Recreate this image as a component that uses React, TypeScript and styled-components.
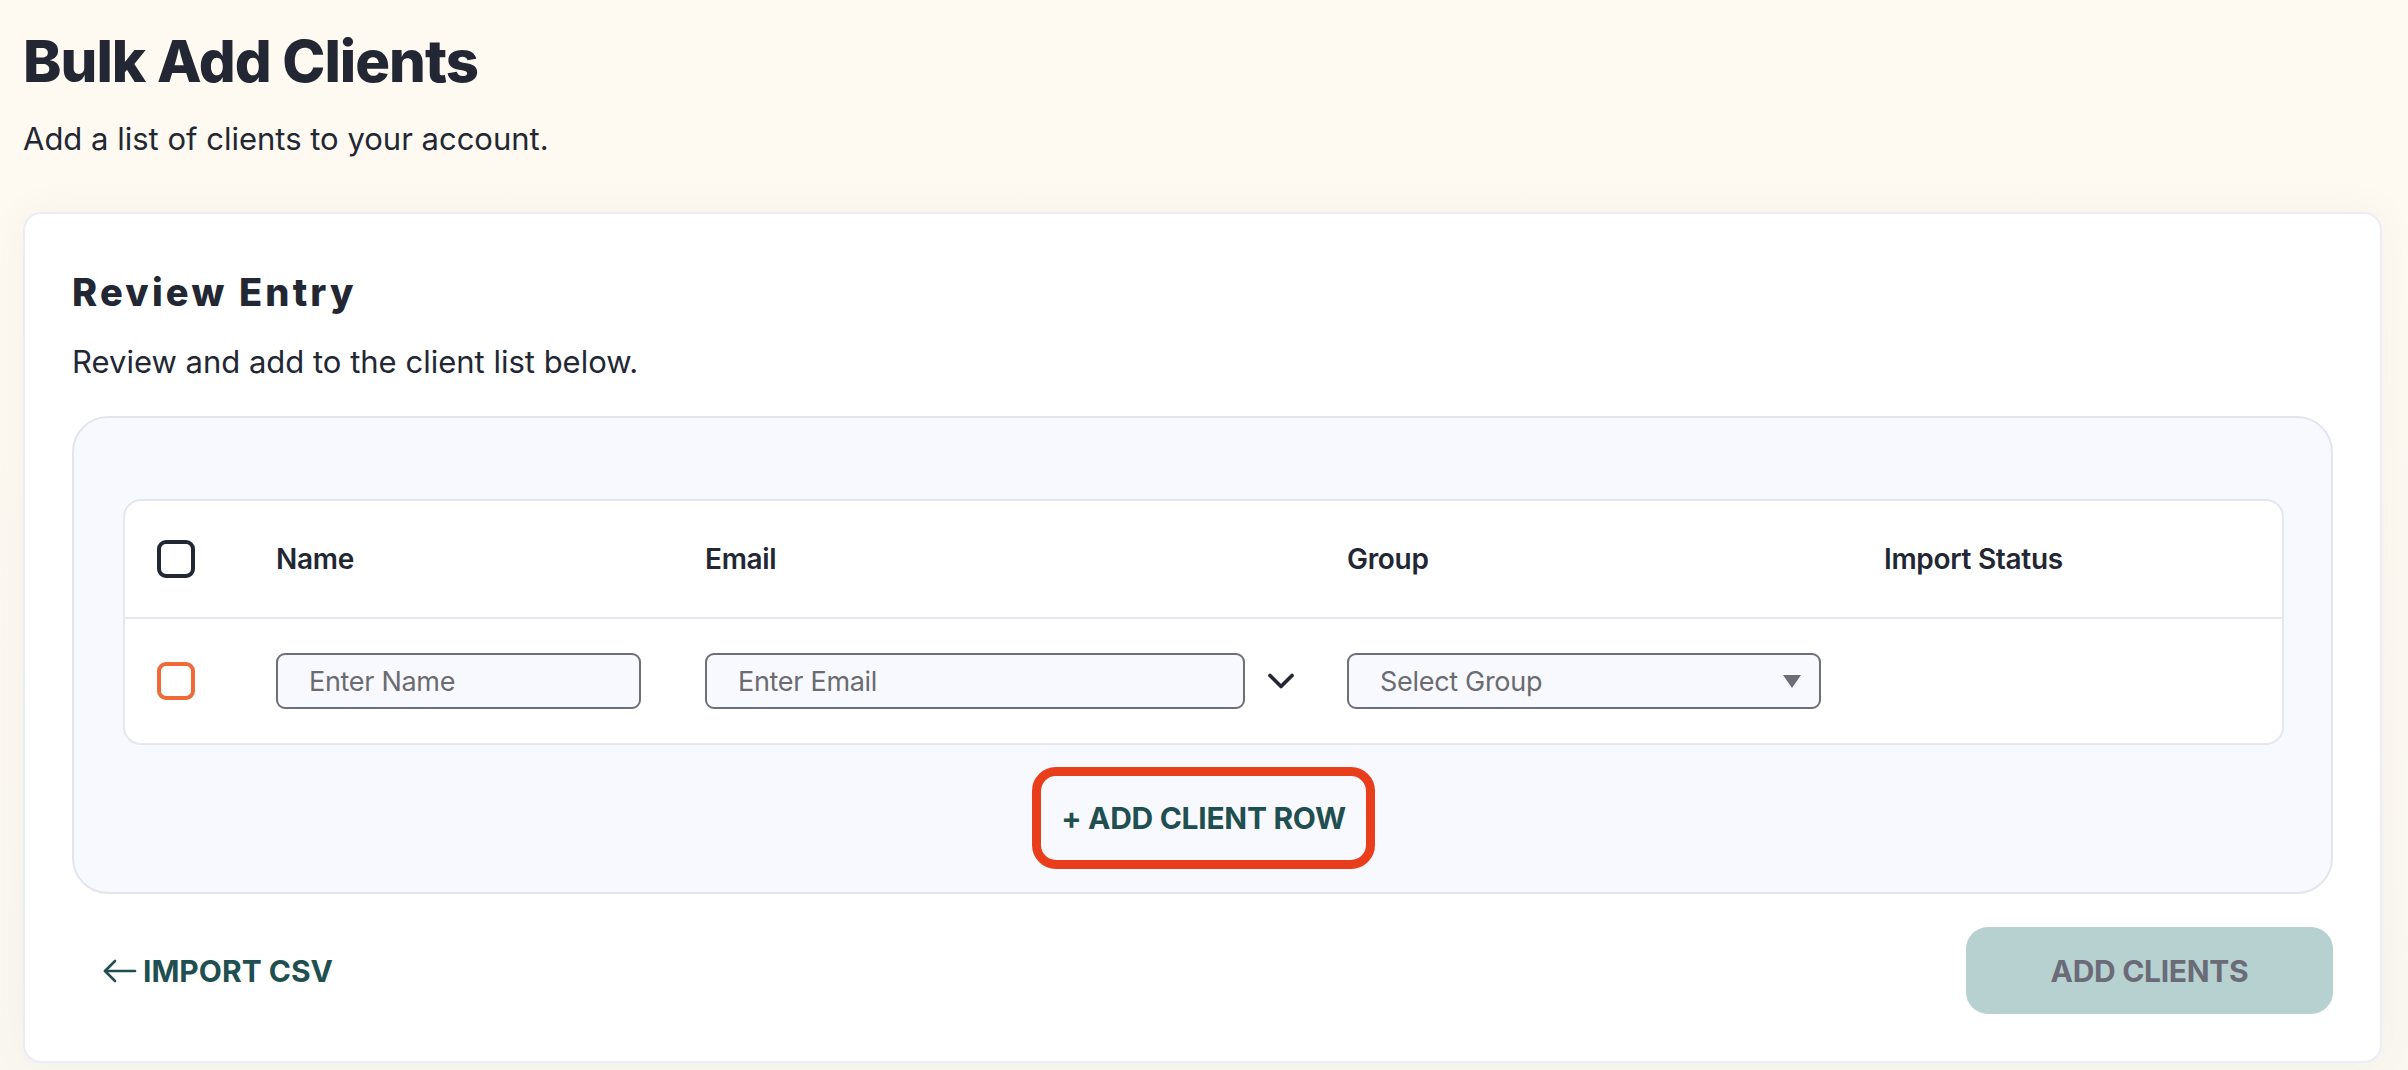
import styled, { createGlobalStyle } from "styled-components";
import { ChevronDown } from "lucide-react";

const GlobalStyle = createGlobalStyle`
  html, body {
    margin: 0;
    padding: 0;
  }
  body {
    font-family: Inter, "Noto Sans", sans-serif;
    color: #222733;
    background: linear-gradient(180deg, #fffaf1 0%, #faf7f1 100%);
    min-height: 100vh;
  }
`;

const Page = styled.main`
  padding: 28px 26px 8px 23px;
  min-height: 100vh;
  box-sizing: border-box;
`;

const PageTitle = styled.h1`
  margin: 0;
  font-size: 58px;
  line-height: 66px;
  font-weight: 800;
  letter-spacing: -1px;
  color: #222733;
`;

const PageLead = styled.p`
  margin: 27px 0 0;
  font-size: 31px;
  line-height: 36px;
  color: #222733;
`;

const Card = styled.section`
  margin-top: 55px;
  background: #ffffff;
  border: 2px solid #ebecf6;
  border-radius: 18px;
  padding: 57px 47px 47px;
  box-shadow: 0 0 40px rgba(120, 100, 60, 0.05);
`;

const CardTitle = styled.h2`
  margin: 0;
  font-size: 38px;
  line-height: 43px;
  font-weight: 800;
  letter-spacing: 3.2px;
`;

const CardLead = styled.p`
  margin: 30px 0 0;
  font-size: 31px;
  line-height: 36px;
`;

const Panel = styled.div`
  margin-top: 36px;
  background: #f8f9fe;
  border: 2px solid #e3e5ee;
  border-radius: 36px;
  padding: 81px 47px 23px 49px;
  display: flex;
  flex-direction: column;
  align-items: center;
  gap: 22px;
`;

const Table = styled.div`
  align-self: stretch;
  background: #ffffff;
  border: 2px solid #e5e7ee;
  border-radius: 18px;
`;

const Row = styled.div<{ $head?: boolean }>`
  display: grid;
  grid-template-columns: 119px 429px 642px 537px 1fr;
  align-items: center;
  padding-left: 32px;
  height: ${(p) => (p.$head ? "116px" : "124px")};
  border-top: ${(p) => (p.$head ? "none" : "2px solid #e5e7ee")};
`;

const HeadCell = styled.div`
  font-size: 28px;
  font-weight: 600;
  color: #222733;
  letter-spacing: -0.3px;
`;

const Cell = styled.div`
  display: flex;
  align-items: center;
  gap: 14px;
`;

const Checkbox = styled.span<{ $tone: "dark" | "accent" }>`
  display: block;
  width: 38px;
  height: 38px;
  box-sizing: border-box;
  border-radius: 9px;
  border: 4px solid ${(p) => (p.$tone === "dark" ? "#222733" : "#ef6a37")};
  background: #ffffff;
`;

const TextInput = styled.input<{ $w: number }>`
  width: ${(p) => p.$w}px;
  height: 56px;
  box-sizing: border-box;
  border: 2px solid #6c6e78;
  border-radius: 9px;
  background: #f8f9fe;
  padding: 0 0 0 31px;
  font-family: Inter, sans-serif;
  font-size: 27px;
  letter-spacing: -0.3px;
  color: #222733;
  outline: none;

  &::placeholder {
    color: #6b6b70;
  }
`;

const SelectBox = styled.div`
  width: 474px;
  height: 56px;
  box-sizing: border-box;
  border: 2px solid #6c6e78;
  border-radius: 9px;
  background: #f8f9fe;
  padding: 0 18px 0 31px;
  display: flex;
  align-items: center;
  justify-content: space-between;
  font-size: 27px;
  letter-spacing: -0.3px;
  color: #6b6b70;
`;

const AddRowButton = styled.button`
  border: 9px solid #e83e1c;
  border-radius: 24px;
  background: #f8f9fe;
  height: 102px;
  padding: 0 20px;
  font-family: Inter, sans-serif;
  font-size: 30px;
  font-weight: 700;
  color: #1f4f50;
  letter-spacing: -0.3px;
`;

const Footer = styled.div`
  margin-top: 33px;
  display: flex;
  align-items: center;
  justify-content: space-between;
`;

const BackLink = styled.a`
  display: flex;
  align-items: center;
  gap: 6px;
  padding-left: 31px;
  font-size: 30px;
  font-weight: 700;
  color: #1f4f50;
  text-decoration: none;
`;

const SubmitButton = styled.button`
  width: 367px;
  height: 87px;
  border: none;
  border-radius: 22px;
  background: #b6d1d0;
  font-family: Inter, sans-serif;
  font-size: 30px;
  font-weight: 700;
  color: #6b6b78;
  letter-spacing: -0.3px;
`;

const ArrowLeft = () => (
  <svg width="34" height="24" viewBox="0 0 34 24" fill="none" stroke="#1f4f50" strokeWidth="2.6" strokeLinecap="round" strokeLinejoin="round">
    <path d="M32 12H2" />
    <path d="M12 2 2 12l10 10" />
  </svg>
);

const Caret = () => (
  <svg width="18" height="13" viewBox="0 0 18 13">
    <polygon points="0,0 18,0 9,13" fill="#6c6e78" />
  </svg>
);

export default function App() {
  return (
    <>
      <GlobalStyle />
      <Page>
        <PageTitle>Bulk Add Clients</PageTitle>
        <PageLead>Add a list of clients to your account.</PageLead>
        <Card>
          <CardTitle>Review Entry</CardTitle>
          <CardLead>Review and add to the client list below.</CardLead>
          <Panel>
            <Table>
              <Row $head>
                <Cell>
                  <Checkbox $tone="dark" />
                </Cell>
                <HeadCell>Name</HeadCell>
                <HeadCell>Email</HeadCell>
                <HeadCell>Group</HeadCell>
                <HeadCell>Import Status</HeadCell>
              </Row>
              <Row>
                <Cell>
                  <Checkbox $tone="accent" />
                </Cell>
                <Cell>
                  <TextInput $w={365} placeholder="Enter Name" />
                </Cell>
                <Cell>
                  <TextInput $w={540} placeholder="Enter Email" />
                  <ChevronDown size={44} strokeWidth={2} color="#222733" />
                </Cell>
                <Cell>
                  <SelectBox>
                    <span>Select Group</span>
                    <Caret />
                  </SelectBox>
                </Cell>
                <Cell />
              </Row>
            </Table>
            <AddRowButton>+ ADD CLIENT ROW</AddRowButton>
          </Panel>
          <Footer>
            <BackLink href="#">
              <ArrowLeft />
              IMPORT CSV
            </BackLink>
            <SubmitButton>ADD CLIENTS</SubmitButton>
          </Footer>
        </Card>
      </Page>
    </>
  );
}
